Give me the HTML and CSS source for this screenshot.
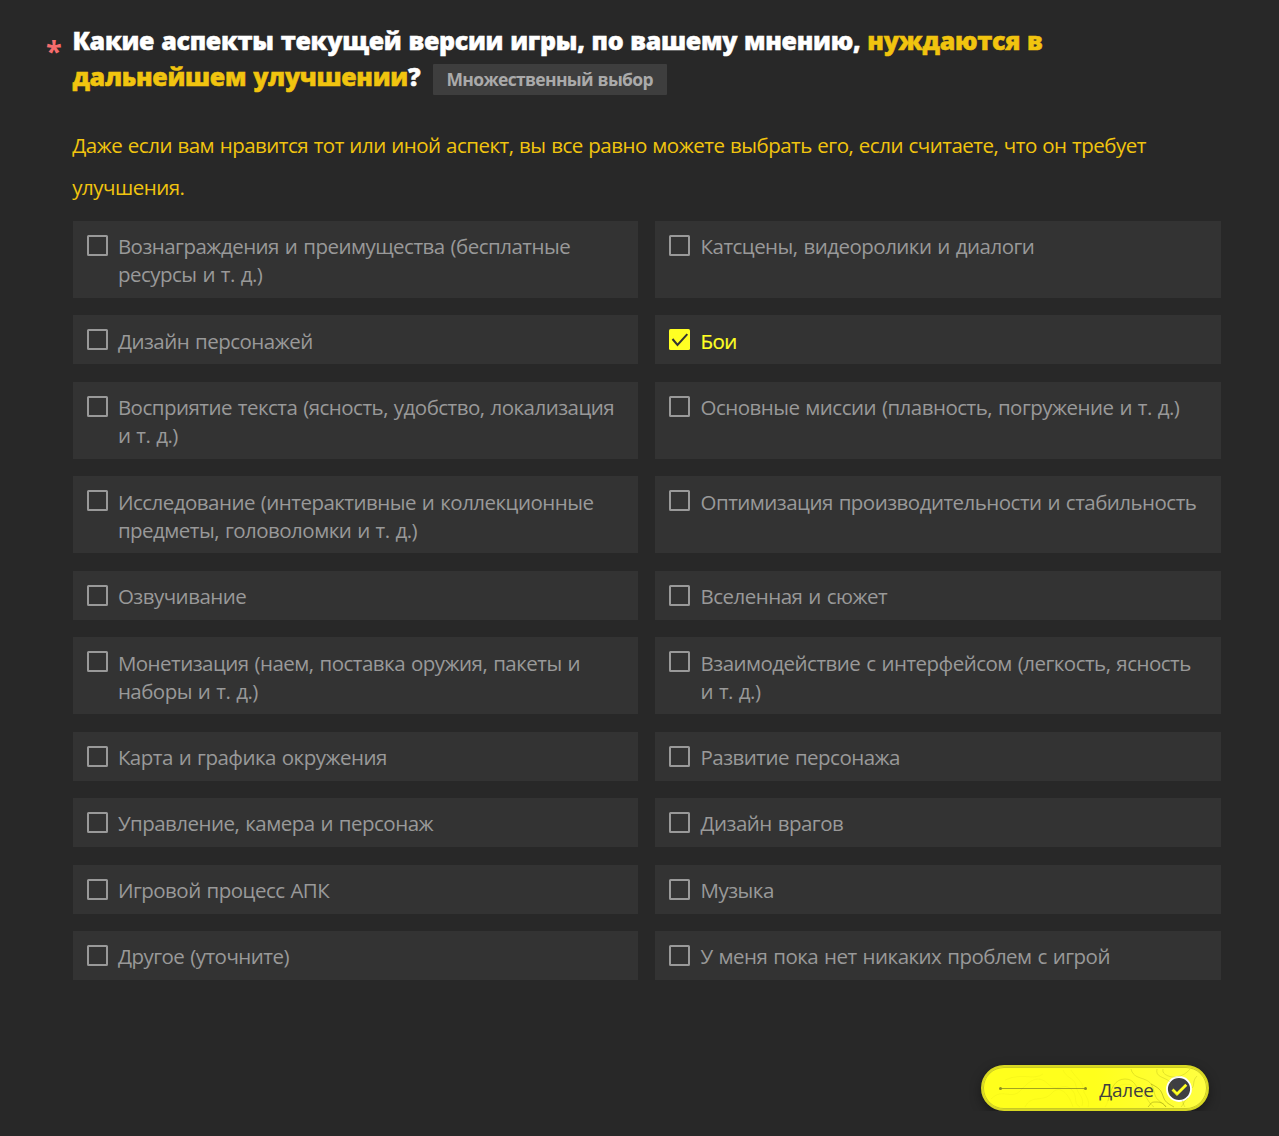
FILE: index.html
```html
<!DOCTYPE html>
<html lang="ru">
<head>
  <meta charset="UTF-8">
  <meta name="viewport" content="width=device-width, initial-scale=1.0">
  <title>Опрос об игре</title>
  <link rel="stylesheet" href="styles.css">
</head>
<body>
  <form class="survey">
    <header class="question">
      <span class="required">*</span>
      <h1>Какие аспекты текущей версии игры, по вашему мнению, <em>нуждаются в<br>дальнейшем улучшении</em>?<span class="tag">Множественный выбор</span></h1>
    </header>

    <p class="hint">Даже если вам нравится тот или иной аспект, вы все равно можете выбрать его, если считаете, что он требует улучшения.</p>

    <div class="options">
      <label class="option"><input type="checkbox"><span>Вознаграждения и преимущества (бесплатные ресурсы и т. д.)</span></label>
      <label class="option"><input type="checkbox"><span>Катсцены, видеоролики и диалоги</span></label>
      <label class="option"><input type="checkbox"><span>Дизайн персонажей</span></label>
      <label class="option checked">
        <svg class="check" viewBox="0 0 21 21"><rect width="21" height="21" rx="1.5" fill="#ffff23"/><path d="M3.500 10l5 6 9.800-10.800" fill="none" stroke="#333" stroke-width="2"/></svg>
        <span>Бои</span>
      </label>
      <label class="option"><input type="checkbox"><span>Восприятие текста (ясность, удобство, локализация и т. д.)</span></label>
      <label class="option"><input type="checkbox"><span>Основные миссии (плавность, погружение и т. д.)</span></label>
      <label class="option"><input type="checkbox"><span>Исследование (интерактивные и коллекционные предметы, головоломки и т. д.)</span></label>
      <label class="option"><input type="checkbox"><span>Оптимизация производительности и стабильность</span></label>
      <label class="option"><input type="checkbox"><span>Озвучивание</span></label>
      <label class="option"><input type="checkbox"><span>Вселенная и сюжет</span></label>
      <label class="option"><input type="checkbox"><span>Монетизация (наем, поставка оружия, пакеты и наборы и т. д.)</span></label>
      <label class="option"><input type="checkbox"><span>Взаимодействие с интерфейсом (легкость, ясность и т. д.)</span></label>
      <label class="option"><input type="checkbox"><span>Карта и графика окружения</span></label>
      <label class="option"><input type="checkbox"><span>Развитие персонажа</span></label>
      <label class="option"><input type="checkbox"><span>Управление, камера и персонаж</span></label>
      <label class="option"><input type="checkbox"><span>Дизайн врагов</span></label>
      <label class="option"><input type="checkbox"><span>Игровой процесс АПК</span></label>
      <label class="option"><input type="checkbox"><span>Музыка</span></label>
      <label class="option"><input type="checkbox"><span>Другое (уточните)</span></label>
      <label class="option"><input type="checkbox"><span>У меня пока нет никаких проблем с игрой</span></label>
    </div>

    <footer>
      <button type="button" class="next">
        <!-- Contour lines behind the label -->
        <svg class="contours" viewBox="0 0 224 42" fill="none" stroke="#77770a">
          <g opacity=".05">
            <path d="M8 32c12-12 20 2 30-9s18-15 27-6 15-2 23 5 1 14 9 18M22 13c18-8 28 1 38-6M42 40c6-13 18-4 27-14s18 4 21 14M80 3c4 9 12 8 13 16s9 11 6 20M88 3c5 8 12 12 12 18s8 12 5 19M122 40c5-8 2-11 9-17s12-8 22-3"/>
          </g>
          <g opacity=".2">
            <path d="M125 34c3-13 7-22 17-22s10 8 17 14 6 10 12 14M148 2c2 8 8 8 15 11s7 9 9 15 7 7 11 12M174 2c-2 8 7 8 12 12s1 10 8 14 5 8 8 12M180 2c-2 6 9 9 14 8s10-4 13-8M205 31c-5 4-4 6-7 9M214 9c-5 5-2 9-5 12"/>
          </g>
          <path opacity=".4" d="M165 40c4-4 2-5 8-5s8 2 10 5M168 17c8 4 10 6 12 12s4 7 11 11"/>
        </svg>
        <svg class="line" viewBox="0 0 88 4"><path d="M1.500 2.500h85" stroke="#a3a320"/><circle cx="1.500" cy="2.500" r="1.500" fill="#8b8b20"/><circle cx="86.500" cy="2.500" r="1.500" fill="#8b8b20"/></svg>
        <span>Далее</span>
        <svg class="ok" viewBox="0 0 26 26"><circle cx="13" cy="13" r="12" fill="#3e3e42" stroke="#fff" stroke-width="1.800"/><path d="M6.500 13.500l4.500 4.500 9.300-9.300" fill="none" stroke="#ffff23" stroke-width="2.800"/></svg>
      </button>
    </footer>
  </form>
</body>
</html>
```
FILE: styles.css
```css
:root {
  --bg: #282828;
  --card: #333;
  --text: #999;
  --gold: #f1c40f;
  --yellow: #ffff23;
}

* {
  margin: 0;
  padding: 0;
  box-sizing: border-box;
}

body {
  background-color: var(--bg);
  color: var(--text);
  font-family: 'Segoe UI', 'Open Sans', 'Noto Sans', sans-serif;
}

.survey {
  padding: 22px 58px 0 46px;
}

.question {
  display: flex;
  height: 73px;
}

.required {
  width: 26.5px;
  color: #f56c6c;
  font-size: 29px;
  font-weight: 700;
  line-height: 58px;
}

h1 {
  color: #fff;
  font-size: 25px;
  font-weight: 800;
  letter-spacing: -0.3px;
  word-spacing: 0.8px;
  line-height: 36px;
  white-space: nowrap;
  -webkit-text-stroke: 0.5px;
}

h1 em {
  color: var(--gold);
  font-style: normal;
}

.tag {
  display: inline-block;
  margin-left: 12.5px;
  width: 234px;
  height: 31px;
  border-radius: 1px;
  background-color: #3e3e3e;
  color: #aaa;
  font-size: 17.5px;
  font-weight: 700;
  letter-spacing: -0.68px;
  line-height: 31px;
  text-align: center;
  vertical-align: 0;
  -webkit-text-stroke: 0;
}

.hint {
  margin: 28.5px 0 0 26.3px;
  color: var(--gold);
  font-size: 20.5px;
  letter-spacing: -0.5px;
  word-spacing: 0.7px;
  line-height: 42px;
}

.options {
  display: grid;
  grid-template-columns: 1fr 1fr;
  gap: 17.5px 17px;
  margin: 13.4px 0 0 26.7px;
}

.option {
  display: flex;
  align-items: flex-start;
  padding: 11.2px 14px 9.8px;
  background-color: var(--card);
  font-size: 20.5px;
  letter-spacing: -0.52px;
  word-spacing: 1.1px;
  line-height: 28px;
}

.option input,
.check {
  flex: none;
  width: 21px;
  height: 21px;
  margin: 2.8px 10.2px 0 0;
}

.option input {
  appearance: none;
  border: 2px solid #999;
  border-radius: 1.5px;
}

.option.checked {
  color: var(--yellow);
  -webkit-text-stroke: 0.2px;
}

footer {
  display: flex;
  justify-content: flex-end;
  margin: 85px 12px 0 0;
}

.next {
  position: relative;
  display: flex;
  align-items: center;
  width: 228px;
  height: 46px;
  padding-left: 16px;
  border: 2px solid #d8d822;
  border-radius: 23px;
  background: linear-gradient(90deg, #ffff1c 50%, #ffff42);
  box-shadow: 0 4px 12px rgba(0, 0, 0, 0.4), inset 0 0 0 1px #c9c926;
  color: #404040;
  font-family: inherit;
  font-size: 19px;
  letter-spacing: -0.3px;
}

.contours {
  position: absolute;
  inset: 0;
  width: 100%;
  height: 100%;
  border-radius: 21px;
}

.line {
  width: 88px;
  height: 4px;
  margin-right: 12px;
}

.next span {
  width: 55px;
  margin-right: 11.5px;
  padding-top: 3px;
}

.ok {
  width: 26px;
  height: 26px;
  margin-top: 1px;
}
```
